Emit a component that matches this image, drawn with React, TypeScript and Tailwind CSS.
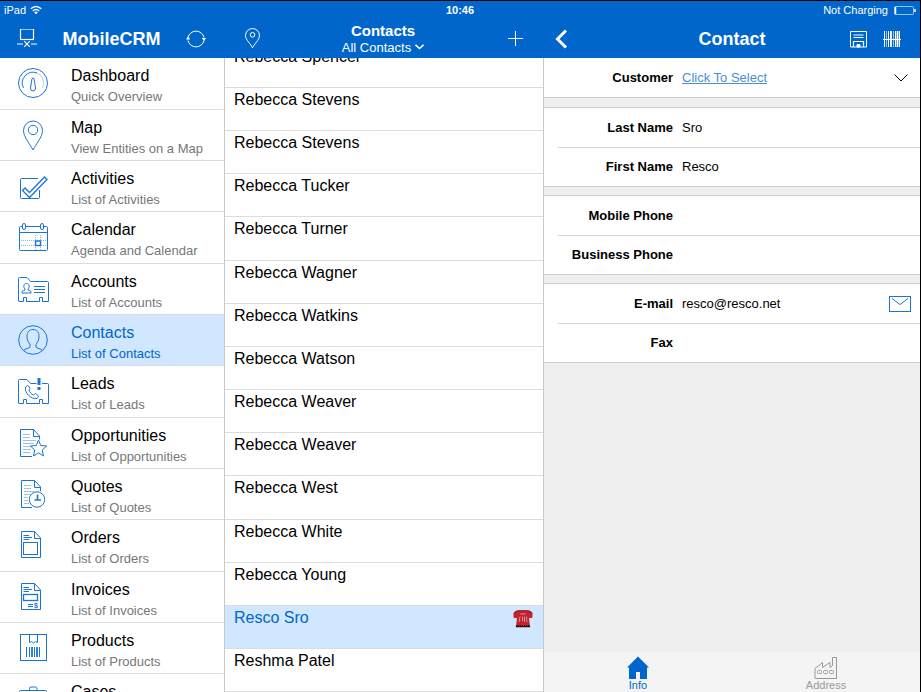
import type { ReactNode } from "react";
import clsx from "clsx";

interface Entity {
  name: string;
  description: string;
  icon: ReactNode;
}

interface Field {
  id: string;
  label: string;
  value: string;
  type?: string;
  action?: ReactNode;
}

const folder = "M1.5 28V5.5Q1.5 4.5 2.5 4.5H10L13.5 8.5H30.5Q31.5 8.5 31.5 9.5V28.5H25.5V24.5H22.5V28.5H9.5V24.5H6.5V28.5H1.5";

const entities: Entity[] = [
  {
    name: "Dashboard",
    description: "Quick Overview",
    icon: (
      <>
        <circle cx="16" cy="16" r="14.5" />
        <path d="M6.5 21A10.8 10.8 0 0 1 20 6" />
        <path d="M20 6A10.8 10.8 0 0 1 25.5 21" opacity=".35" />
        <path d="M15 11.5L13.5 21Q13.5 24 16 24T18.5 21L17 11.5Q16 10.5 15 11.5Z" />
      </>
    ),
  },
  {
    name: "Map",
    description: "View Entities on a Map",
    icon: (
      <>
        <path d="M16 31C13 25 6.5 18 6.5 11.5A9.5 9.5 0 0 1 25.5 11.5C25.5 18 19 25 16 31Z" />
        <circle cx="16" cy="11" r="4.7" />
      </>
    ),
  },
  {
    name: "Activities",
    description: "List of Activities",
    icon: (
      <>
        <path d="M21 8.5H4.5Q3.5 8.5 3.5 9.5V27.5Q3.5 28.5 4.5 28.5H21.5Q22.5 28.5 22.5 27.5V20" />
        <path d="M5.5 20.5L8 18L12.5 22.5L27.5 7L30 9.5L12.5 27.5Z" strokeWidth="1.3" />
      </>
    ),
  },
  {
    name: "Calendar",
    description: "Agenda and Calendar",
    icon: (
      <>
        <path d="M5.5 5.5H3.5Q2.5 5.5 2.5 6.5V28.5Q2.5 29.5 3.5 29.5H29.5Q30.5 29.5 30.5 28.5V6.5Q30.5 5.5 29.5 5.5H26.5M8.5 5.5H23.5M2.5 11.5H30.5" />
        <rect x="5.5" y="2.5" width="3" height="6" rx="1.5" />
        <rect x="23.5" y="2.5" width="3" height="6" rx="1.5" />
        <path d="M4 19.5H29M4 24.5H29M18.5 14V29M23.5 14V29" strokeDasharray="1 1" opacity=".5" />
        <rect x="18.5" y="20" width="5" height="4.5" strokeWidth="1.4" />
      </>
    ),
  },
  {
    name: "Accounts",
    description: "List of Accounts",
    icon: (
      <>
        <path d={folder} />
        <path d="M5 20V18.5Q6 17.5 8 17V16C6 14 6.5 10.5 9.5 10.5S13 14 11 16V17Q13 17.5 14 18.5V20Z" />
        <path d="M17 13.5H28M17 16.5H28M17 19.5H28" />
      </>
    ),
  },
  {
    name: "Contacts",
    description: "List of Contacts",
    icon: (
      <>
        <circle cx="16" cy="16" r="14.3" />
        <path d="M6.5 26.5C8 24.5 12.5 24.5 13 23V20.5C10.5 17 10 15 10 12C10 8 12.5 5.5 16 5.5S22 8 22 12C22 15 21.5 17 19 20.5V23C19.5 24.5 24 24.5 25.5 26.5" />
      </>
    ),
  },
  {
    name: "Leads",
    description: "List of Leads",
    icon: (
      <>
        <path d="M1.5 28V5.5Q1.5 4.5 2.5 4.5H10L13.5 8.5H19.5M25 8.5H30.5Q31.5 8.5 31.5 9.5V28.5H25.5V24.5H22.5V28.5H9.5V24.5H6.5V28.5H1.5" />
        <path d="M10.5 10.5L8.5 12C7.5 18 14 24.5 20 23.5L21.5 21.5Q21.5 20.5 18.5 18.5L16.5 20C14.5 19.5 12.5 17 12 15L13 13.5Q12 10.5 10.5 10.5Z" />
        <path d="M22 3V10M22 12V15" strokeWidth="3" />
      </>
    ),
  },
  {
    name: "Opportunities",
    description: "List of Opportunities",
    icon: (
      <>
        <path d="M15 29.5H3.5V2.5H16.5L22.5 9V12.5M16.5 2.5V9.5H22.5" />
        <path d="M6 7.5H13M6 10.5H13M6 13.5H19M6 16.5H17M6 19.5H13M6 22.5H14M6 25.5H13" opacity=".45" />
        <path d="M21.5 13L23.7 18.5L29.7 19L25.2 23L26.5 29L21.5 25.8L16.5 29L17.8 23L13.3 19L19.3 18.5Z" />
      </>
    ),
  },
  {
    name: "Quotes",
    description: "List of Quotes",
    icon: (
      <>
        <path d="M15 29.5H4.5V2.5H17.5L23.5 9V13M17.5 2.5V9.5H23.5" />
        <path d="M7 7.5H14M7 10.5H14M7 13.5H17M7 16.5H13M7 19.5H11M7 22.5H11M7 25.5H12" opacity=".45" />
        <circle cx="20" cy="21.5" r="7.7" />
        <path d="M20.5 16.5V22H24M17.5 22H20.5" strokeWidth="1.6" />
      </>
    ),
  },
  {
    name: "Orders",
    description: "List of Orders",
    icon: (
      <>
        <path d="M4.5 2.5H17.5L23.5 9V28.5H4.5ZM17.5 2.5V9.5H23.5" />
        <path d="M6.5 6.5H12M6.5 8.5H15M6.5 10.5H12" />
        <rect x="6.5" y="13.5" width="14" height="12" />
      </>
    ),
  },
  {
    name: "Invoices",
    description: "List of Invoices",
    icon: (
      <>
        <path d="M4.5 2.5H17.5L23.5 9V28.5H4.5ZM17.5 2.5V9.5H23.5" />
        <path d="M6.5 6.5H12M6.5 8.5H15M6.5 10.5H12M11 23.5H16M11 25.5H16" />
        <rect x="6.5" y="13.5" width="14" height="6" strokeWidth="1.3" />
        <text x="17" y="27" fontSize="7" fontWeight="bold" fill="currentColor" stroke="none">$</text>
      </>
    ),
  },
  {
    name: "Products",
    description: "List of Products",
    icon: (
      <>
        <rect x="3.5" y="2.5" width="26" height="26" />
        <path d="M12.5 2.5V10.5L14.5 9.5L16.5 11L18.5 9.5L20.5 10.5V2.5" />
        <path d="M9.5 15V25M12.5 15V25M17.5 15V25M22.5 15V25" />
        <path d="M15 15V25M20 15V25" strokeWidth="1.8" />
      </>
    ),
  },
  {
    name: "Cases",
    description: "List of Cases",
    icon: (
      <>
        <rect x="2.5" y="7.5" width="27" height="20" rx="1" />
        <path d="M12.5 7.5V5.5Q12.5 4 14 4H18.5Q20 4 20 5.5V7.5" />
      </>
    ),
  },
];

const contacts = [
  "Rebecca Spencer",
  "Rebecca Stevens",
  "Rebecca Stevens",
  "Rebecca Tucker",
  "Rebecca Turner",
  "Rebecca Wagner",
  "Rebecca Watkins",
  "Rebecca Watson",
  "Rebecca Weaver",
  "Rebecca Weaver",
  "Rebecca West",
  "Rebecca White",
  "Rebecca Young",
  "Resco Sro",
  "Reshma Patel",
];

const groups: Field[][] = [
  [
    { id: "last-name", label: "Last Name", value: "Sro" },
    { id: "first-name", label: "First Name", value: "Resco" },
  ],
  [
    { id: "mobile-phone", label: "Mobile Phone", value: "", type: "tel" },
    { id: "business-phone", label: "Business Phone", value: "", type: "tel" },
  ],
  [
    {
      id: "email",
      label: "E-mail",
      value: "resco@resco.net",
      type: "email",
      action: (
        <button type="button" aria-label="Send e-mail" className="mr-2 text-[#1b74d1]">
          <svg width="24" height="18" viewBox="0 0 24 18" fill="none" stroke="currentColor">
            <rect x="1.5" y="1.5" width="21" height="15" />
            <path d="M4 3.5L12 9.5L20 3.5" />
          </svg>
        </button>
      ),
    },
    { id: "fax", label: "Fax", value: "", type: "tel" },
  ],
];

function StatusBar() {
  return (
    <div className="grid h-[18px] shrink-0 grid-cols-3 items-center pl-1 pr-1 text-[11px] leading-[18px]">
      <div className="flex items-center gap-1">
        <span>iPad</span>
        <svg width="12" height="10" viewBox="0 0 12 10" fill="none" stroke="currentColor" strokeWidth="1.4">
          <path d="M.8 3.8Q6-1 11.2 3.8M2.8 6Q6 3 9.2 6" />
          <path d="M4.2 7.2Q6 5.8 7.8 7.2L6 9.2Z" fill="currentColor" stroke="none" />
        </svg>
      </div>
      <div className="text-center font-bold">10:46</div>
      <div className="flex items-center justify-end gap-[6px]">
        <span>Not Charging</span>
        <svg width="22" height="9" viewBox="0 0 22 9" fill="none" stroke="currentColor">
          <rect x=".5" y=".5" width="19" height="8" rx="1" opacity=".6" />
          <path d="M1.5 1V8" strokeWidth="1.5" />
          <path d="M21 3V6" strokeWidth="1.5" />
        </svg>
      </div>
    </div>
  );
}

function NavBar() {
  return (
    <div className="flex h-[39px] shrink-0 items-center">
      <div className="flex w-56 shrink-0 items-center pl-[17px] pr-[18px]">
        <button aria-label="Connection">
          <svg width="20" height="20" viewBox="0 0 20 20" fill="none" stroke="currentColor">
            <rect x="3.5" y="0" width="13" height="10.5" strokeWidth="1.2" />
            <path d="M0 15H6M14 15H20" />
            <path d="M7.2 12.2L12.8 17.8M12.8 12.2L7.2 17.8" strokeWidth="1.2" />
          </svg>
        </button>
        <h1 className="flex-1 text-center text-lg font-bold leading-6">MobileCRM</h1>
        <button aria-label="Synchronize">
          <svg width="20" height="20" viewBox="0 0 20 20" fill="none" stroke="currentColor">
            <path d="M2 8.5A8.2 8.2 0 0 1 18 8.5M18 11.5A8.2 8.2 0 0 1 2 11.5" />
            <path d="M0 10.5L2 7.5L4.2 10.5ZM15.8 9L18 12L20 9Z" fill="currentColor" stroke="none" />
          </svg>
        </button>
      </div>
      <div className="flex w-80 shrink-0 items-center pl-5 pr-[21px]">
        <button aria-label="Show on map">
          <svg width="17" height="21" viewBox="0 0 17 21" fill="none" stroke="currentColor">
            <path d="M8.5 20C7 16 1.5 12 1.5 7.5A7 7 0 0 1 15.5 7.5C15.5 12 10 16 8.5 20Z" />
            <circle cx="8.5" cy="6.8" r="2.3" />
          </svg>
        </button>
        <div className="flex flex-1 flex-col items-center pr-[3px]">
          <h2 className="text-[15px] font-bold leading-[17px]">Contacts</h2>
          <button className="flex items-center gap-1 text-[13px] leading-[17px]">
            All Contacts
            <svg width="9" height="6" viewBox="0 0 9 6" fill="none" stroke="currentColor" strokeWidth="1.6">
              <path d="M.5 .8L4.5 4.5L8.5 .8" />
            </svg>
          </button>
        </div>
        <button aria-label="Add contact">
          <svg width="15" height="15" viewBox="0 0 15 15" fill="none" stroke="currentColor">
            <path d="M7.5 0V15M0 7.5H15" />
          </svg>
        </button>
      </div>
      <div className="flex min-w-0 flex-1 items-center pl-[10px] pr-[19px]">
        <button aria-label="Back">
          <svg width="14" height="20" viewBox="0 0 14 20" fill="none" stroke="currentColor" strokeWidth="3">
            <path d="M12 1.5L3.5 10L12 18.5" />
          </svg>
        </button>
        <h2 className="flex-1 pl-[46px] text-center text-lg font-bold leading-6">Contact</h2>
        <div className="flex items-center gap-4">
          <button aria-label="Save">
            <svg width="17" height="18" viewBox="0 0 17 18" fill="none" stroke="currentColor">
              <path d="M.5 1.5H16.5V17H.5Z" />
              <path d="M3.5 5H13.5M3.5 7.5H13.5" />
              <path d="M3.5 17V11.5H13.5V17" strokeWidth="1.2" />
              <path d="M7 14.5H10V17H7Z" fill="currentColor" />
            </svg>
          </button>
          <button aria-label="Scan barcode">
            <svg width="18" height="18" viewBox="0 0 18 18" fill="none" stroke="currentColor">
              <path d="M1.5 1V17M5.5 1V17M12.5 1V17M16.5 1V17M0 9.5H18" />
              <path d="M3.5 1V17M10.5 1V17" opacity=".6" />
              <path d="M8 1V17M14.5 1V17" strokeWidth="1.8" />
            </svg>
          </button>
        </div>
      </div>
    </div>
  );
}

function Sidebar({ selected }: { selected: string }) {
  return (
    <nav className="w-56 shrink-0 overflow-hidden bg-white">
      <ul>
        {entities.map((entity) => {
          const active = entity.name === selected;
          return (
            <li
              key={entity.name}
              className={clsx(
                "h-[51px] border-b border-[#dcdcdc] [&:nth-child(3n+1)]:h-[52px]",
                active && "bg-[#d1e7ff]"
              )}
            >
              <a href={`#${entity.name.toLowerCase()}`} className="flex h-full pl-[17px] pt-2">
                <svg
                  width="32"
                  height="32"
                  viewBox="0 0 32 32"
                  fill="none"
                  stroke="currentColor"
                  className="mt-px shrink-0 text-[#1b74d1]"
                >
                  {entity.icon}
                </svg>
                <span className={clsx("ml-[22px]", active ? "text-[#0066cc]" : "text-black")}>
                  <span className="block text-base leading-5">{entity.name}</span>
                  <span className={clsx("block text-[13px] leading-[21px]", !active && "text-[#777777]")}>
                    {entity.description}
                  </span>
                </span>
              </a>
            </li>
          );
        })}
      </ul>
    </nav>
  );
}

function PhoneBadge() {
  return (
    <svg width="20" height="18" viewBox="0 0 20 18" className="mt-1 shrink-0">
      <path d="M3 17L4 8H1.5Q.5 8 .5 6.5V4Q.5 1 5 .8H15Q19.5 1 19.5 4V6.5Q19.5 8 18.5 8H16L17 17Z" fill="#c8202f" />
      <path d="M1 3.5Q2 1 5 .7H15Q18 1 19 3.5" stroke="#7a1a20" fill="none" />
      <path d="M7.5 4H12.5M7 6.5L6 12M9.5 6.5V11M11.5 6.5V12M13.5 6.5L14 12" stroke="#c99a9a" fill="none" />
      <path d="M3 15H17L17.2 17.2H2.8Z" fill="#241013" />
      <path d="M4 15.5H17" stroke="#c8202f" strokeDasharray="1 1" />
    </svg>
  );
}

function ContactList({ selected }: { selected: string }) {
  return (
    <section className="w-80 shrink-0 overflow-hidden border-x border-[#c8c8c8] bg-white">
      <ul className="-mt-[13px]">
        {contacts.map((name, i) => (
          <li
            key={i}
            className={clsx(
              "h-[43px] border-b border-[#dcdcdc] [&:nth-child(6n+5)]:h-[44px]",
              name === selected ? "bg-[#d1e7ff] text-[#0066cc]" : "text-black"
            )}
          >
            <button className="flex h-full w-full items-start justify-between pl-[9px] pr-[10px] text-left text-base leading-6">
              {name}
              {name === selected && <PhoneBadge />}
            </button>
          </li>
        ))}
      </ul>
    </section>
  );
}

function FieldRow({ field }: { field: Field }) {
  return (
    <div className="ml-[14px] flex h-10 items-center border-b border-[#d4d4d4] last:ml-0 last:h-[39px] last:border-[#cccccc] last:pl-[14px]">
      <label htmlFor={field.id} className="w-[115px] shrink-0 text-right font-bold">
        {field.label}
      </label>
      <input
        id={field.id}
        type={field.type ?? "text"}
        defaultValue={field.value}
        className="ml-[9px] min-w-0 flex-1 bg-transparent outline-none"
      />
      {field.action}
    </div>
  );
}

function ContactDetail() {
  return (
    <section className="flex min-w-0 flex-1 flex-col bg-[#efefef] text-[13px] leading-5 text-black">
      <form className="flex flex-1 flex-col gap-2">
        <div className="mb-px flex h-10 items-center border-b border-[#cccccc] bg-white pl-[14px]">
          <span className="w-[115px] shrink-0 text-right font-bold">Customer</span>
          <a href="#customer" className="ml-[9px] flex-1 text-[#4a8fd0] underline">
            Click To Select
          </a>
          <button type="button" aria-label="Expand customer" className="mr-3">
            <svg width="14" height="8" viewBox="0 0 14 8" fill="none" stroke="currentColor">
              <path d="M.5 .5L7 7L13.5 .5" />
            </svg>
          </button>
        </div>
        {groups.map((fields) => (
          <div key={fields[0].id} className="border-t border-[#cccccc] bg-white">
            {fields.map((field) => (
              <FieldRow key={field.id} field={field} />
            ))}
          </div>
        ))}
      </form>
      <div className="grid h-10 grid-cols-2 bg-[#f4f4f4] text-[11px] leading-3">
        <button className="flex flex-col items-center pt-1 text-[#0066cc]">
          <svg width="22" height="23" viewBox="0 0 22 23" fill="currentColor">
            <path d="M11 .5L22 11.5H20V23H13V16H9V23H2V11.5H0Z" />
          </svg>
          Info
        </button>
        <button className="flex flex-col items-center pt-1 text-[#999999]">
          <svg width="24" height="23" viewBox="0 0 24 23" fill="none" stroke="currentColor">
            <path d="M1 22.5V12.5L8.5 6.5V11.5L16 6.5V11.5L18.5 9.5V1.5H22.5V22.5Z" />
            <rect x="3.5" y="14.5" width="4" height="3" rx="1" />
            <rect x="9.5" y="14.5" width="4" height="3" rx="1" />
            <rect x="15.5" y="14.5" width="4" height="3" rx="1" />
          </svg>
          Address
        </button>
      </div>
    </section>
  );
}

export default function App() {
  return (
    <div className="flex h-screen flex-col overflow-hidden border-r border-t border-black bg-white font-['Liberation_Sans',Arial,sans-serif]">
      <header className="bg-[#0066cc] text-white">
        <StatusBar />
        <NavBar />
      </header>
      <main className="flex min-h-0 flex-1">
        <Sidebar selected="Contacts" />
        <ContactList selected="Resco Sro" />
        <ContactDetail />
      </main>
    </div>
  );
}
